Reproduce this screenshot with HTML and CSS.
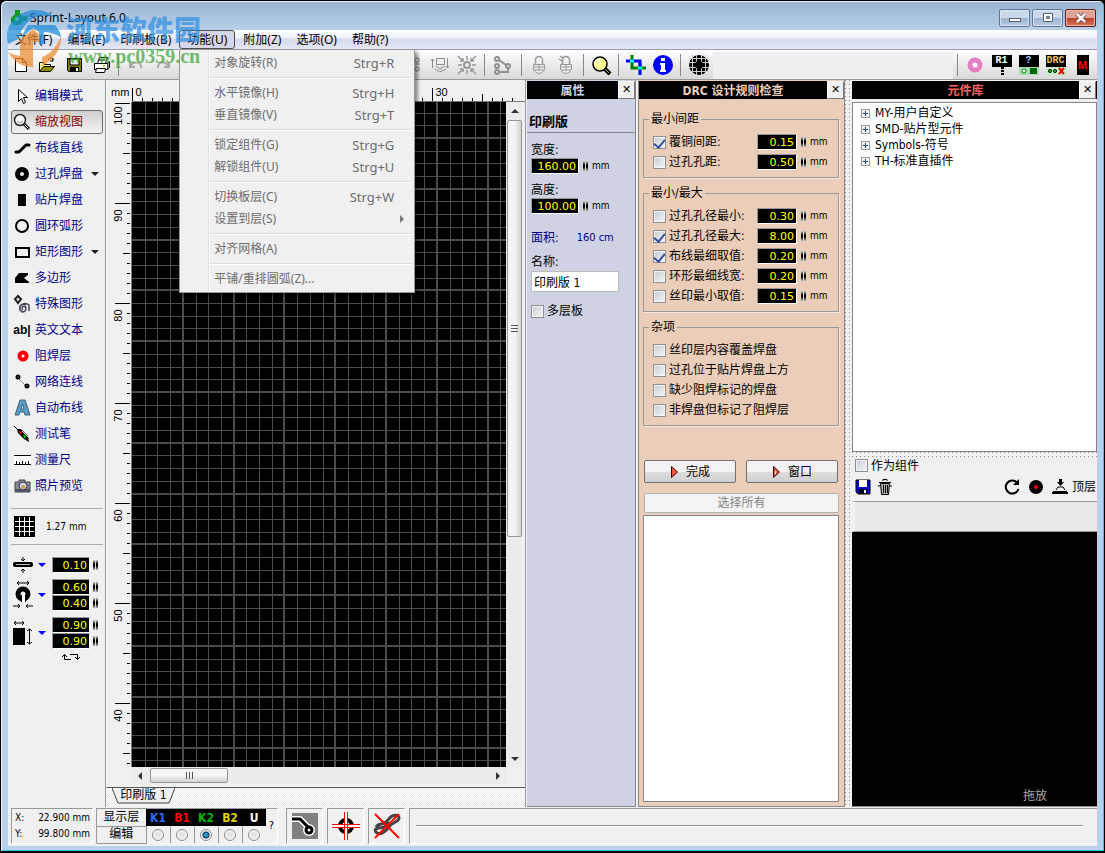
FILE: index.html
```html
<!DOCTYPE html>
<html lang="zh-CN">
<head>
<meta charset="utf-8">
<title>Sprint-Layout 6.0</title>
<link rel="stylesheet" href="styles.css">
</head>
<body>
<div class="window">
  <header class="titlebar">
    <svg class="app-icon" width="17" height="18" viewBox="0 0 17 18"><path fill="#0a9a1c" d="M4 1h5v4h1l2 2h4v5h-4l-3 4H3l-3-3V9l3-3 1-1z"/><circle cx="6" cy="10" r="2" fill="#d8ffd8"/></svg>
    <h1>Sprint-Layout 6.0</h1>
    <div class="caption-buttons">
      <button aria-label="最小化"><svg width="14" height="12"><rect x="1.500" y="6.500" width="11" height="3" fill="#fff" stroke="#53606f"/></svg></button>
      <button aria-label="最大化"><svg width="14" height="12"><path fill="#fff" stroke="#53606f" fill-rule="evenodd" d="M2.500 1.500h9v8h-9zM5.500 4.500h3v2h-3z"/></svg></button>
      <button class="quit" aria-label="关闭"><svg width="14" height="12"><path d="M3 2l8 8M11 2l-8 8" stroke="#53404a" stroke-width="4"/><path d="M3 2l8 8M11 2l-8 8" stroke="#fff" stroke-width="2.500"/></svg></button>
    </div>
  </header>

  <div class="client">
    <nav class="menubar">
      <button>文件(F)</button>
      <button>编辑(E)</button>
      <button>印刷板(B)</button>
      <div class="menu-host">
        <button class="open">功能(U)</button>
        <div class="dropdown">
          <button>对象旋转(R)<kbd>Strg+R</kbd></button>
          <hr>
          <button>水平镜像(H)<kbd>Strg+H</kbd></button>
          <button>垂直镜像(V)<kbd>Strg+T</kbd></button>
          <hr>
          <button>锁定组件(G)<kbd>Strg+G</kbd></button>
          <button>解锁组件(U)<kbd>Strg+U</kbd></button>
          <hr>
          <button>切换板层(C)<kbd>Strg+W</kbd></button>
          <button class="has-sub">设置到层(S)</button>
          <hr>
          <button>对齐网格(A)</button>
          <hr>
          <button>平铺/重排圆弧(Z)...</button>
        </div>
      </div>
      <button>附加(Z)</button>
      <button>选项(O)</button>
      <button>帮助(?)</button>
    </nav>

    <div class="toolbar">
      <button aria-label="新建"><svg width="20" height="20"><path d="M4.500 3.500h7l4 4v9h-11zM11.500 3.500v4h4" fill="#fff" stroke="#000"/></svg></button>
      <button aria-label="打开"><svg width="20" height="20"><path d="M2.500 16.500v-9h4l1 2h6v3" fill="#ffff9a" stroke="#000"/><path d="M2.500 16.500l4-5h11l-4 5z" fill="#8c8c00" stroke="#000"/><path d="M11 5c2-3 4-2 5 0M16 3v3h-3" fill="none" stroke="#000"/></svg></button>
      <button aria-label="保存"><svg width="20" height="20"><path d="M3.500 3.500h14v13h-13l-1-1z" fill="#808000" stroke="#000"/><path d="M6 4h9v6H6z" fill="#e8e8e8" stroke="#000"/><path d="M6 12h9v5H6z"/><path d="M12 13h2v3h-2z" fill="#fff"/></svg></button>
      <button aria-label="打印"><svg width="20" height="20"><path d="M6.500 8.500l2-6h8l-2 6M8 5h6M3.500 8.500h13v6h-13z" fill="#fff" stroke="#000"/><path d="M16.500 8.500l2-2v6l-2 2" fill="#999" stroke="#000"/><path d="M5.500 13.500h9l-1 4h-9z" fill="#fff" stroke="#000"/><path d="M12 11h2" stroke="#cc0" stroke-width="2"/></svg></button>
      <i class="sep"></i>
      <button aria-label="撤销"><svg width="20" height="20" fill="none" stroke="#aaa" stroke-width="2"><path d="M4 7v5h5M4 12c3-6 12-6 11 1"/></svg></button>
      <button aria-label="重做"><svg width="20" height="20" fill="none" stroke="#aaa" stroke-width="2"><path d="M16 7v5h-5M16 12c-3-6-12-6-11 1"/></svg></button>
      <i class="behind-menu"></i>
      <button aria-label="镜像"><svg width="20" height="20" fill="none" stroke="#999" stroke-width="1.500"><circle cx="14" cy="5" r="2"/><circle cx="14" cy="14" r="2"/><path d="M5 9h12M5 5v10"/></svg></button>
      <button aria-label="旋转"><svg width="20" height="20" fill="none" stroke="#8c8c8c"><path d="M6.500 3.500h8v6h-8zM2.500 4v9M1 6l1.500-2L4 6M17.500 3v10M16 11l1.500 2 1.500-2M6 11l4 3 5-3M5 14l5 3 6-3"/></svg></button>
      <button aria-label="对齐"><svg width="20" height="20" fill="none" stroke="#999" stroke-width="1.500"><circle cx="10" cy="10" r="3" stroke-width="2"/><path d="M1 1l5 5M6 3v3H3M19 1l-5 5M14 3v3h3M1 19l5-5M3 14h3v3M19 19l-5-5M17 14h-3v3M10 1v4M10 15v4M1 10h4M15 10h4"/></svg></button>
      <i class="sep"></i>
      <button class="wide" aria-label="连接"><svg width="20" height="20" fill="none" stroke="#909090" stroke-width="2"><circle cx="4" cy="4" r="2"/><circle cx="4" cy="11" r="2"/><circle cx="15" cy="11" r="2"/><circle cx="4" cy="17" r="2"/><path d="M6 5l7 5M15 13v4H6"/></svg></button>
      <i class="sep"></i>
      <button aria-label="锁定"><svg width="20" height="20" fill="#eee" stroke="#999"><path d="M6.500 9V5a3.500 3.500 0 0 1 7 0v4" fill="none" stroke-width="1.500"/><path d="M4.500 9.500h11v5q-2 4-5.500 4t-5.500-4zM5 12h10M5 15h10M10 10v6"/></svg></button>
      <button aria-label="解锁"><svg width="20" height="20" fill="#eee" stroke="#999"><path d="M6.500 9V5a3.500 3.500 0 0 1 7 0v4M3 4l3 2M4 1l3 2" fill="none" stroke-width="1.500"/><path d="M4.500 9.500h11v5q-2 4-5.500 4t-5.500-4zM5 12h10M5 15h10M10 10v6"/></svg></button>
      <i class="sep"></i>
      <button aria-label="缩放"><svg width="22" height="22"><circle cx="10" cy="10" r="7" fill="#ffff96" stroke="#000" stroke-width="1.500"/><path d="M6 9q1-3 4-4" stroke="#fff" fill="none" stroke-width="2"/><path d="M15 15l5 5" stroke="#000" stroke-width="4"/><path d="M15 15l4 4" stroke="#a9a936"/></svg></button>
      <i class="sep"></i>
      <button aria-label="裁剪"><svg width="22" height="22" fill="none" stroke-width="3"><path d="M7 1v13h14" stroke="#008000"/><path d="M1 7h14v14" stroke="#00f"/><path d="M5 7h4M13 14h4" stroke="#0ff"/><path d="M15 9v3" stroke="#00f"/></svg></button>
      <button aria-label="信息"><svg width="22" height="22"><circle cx="11" cy="11" r="10" fill="#00f"/><path d="M9 4h4v3H9zM8 9h5v7h1v2H8v-2h1v-5H8z" fill="#fff"/></svg></button>
      <i class="sep"></i>
      <button class="wide" aria-label="网格"><svg width="22" height="22"><circle cx="11" cy="11" r="10"/><path d="M1 4.500h20M1 8.500h20M1 13.500h20M1 17.500h20M4.500 1v20M8.500 1v20M13.500 1v20M17.500 1v20" stroke="#ccc"/><circle cx="11" cy="11" r="4"/></svg></button>
      <div class="toolbar-blank"></div>
      <i class="sep"></i>
      <button aria-label="焊盘"><svg width="20" height="20"><circle cx="10" cy="10" r="5" fill="#fff" stroke="#e57fc4" stroke-width="5"/></svg></button>
      <button class="chip" aria-label="元件"><span>R1</span><svg width="20" height="8"><path d="M9 0h3v2H9zM9 3h3v2H9zM9 6h3v2H9z"/></svg></button>
      <button class="chip query" aria-label="查询"><span>?</span><svg width="20" height="8"><path fill="#a9dcb4" d="M0 0h20v8H0z"/><circle cx="5" cy="4" r="2" stroke="#080" fill="#fff"/><path fill="#060" d="M11 1h7v6h-7z"/></svg></button>
      <button class="chip rules" aria-label="规则检查"><span>DRC</span><svg width="20" height="8"><path fill="#c5ecc9" d="M0 0h20v8H0z"/><circle cx="4" cy="4" r="1.500" fill="#0f0" stroke="#000"/><circle cx="9" cy="4" r="1.500" fill="#0f0" stroke="#000"/><path d="M13 1l5 6M18 1l-5 6" stroke="#f00" stroke-width="2"/></svg></button>
      <button aria-label="元件库"><span class="macro">M</span></button>
    </div>

    <main class="workspace">
      <aside class="tools">
        <button><svg width="20" height="20"><path d="M6.500 3.500v12l3-3 2 5 2-1-2-5h4z" fill="#fff" stroke="#000"/></svg>编辑模式</button>
        <button class="active"><svg width="20" height="20"><circle cx="8" cy="8" r="5.500" fill="#fff" stroke="#222" stroke-width="1.500"/><path d="M5 8q3 3 6 0v2q-3 3-6 0z" fill="#bbb"/><path d="M12 12l5 5" stroke="#000" stroke-width="3"/><path d="M12.500 12.500l4 4" stroke="#fff"/></svg>缩放视图</button>
        <button><svg width="20" height="20"><path d="M4 14h3l7-7h3" fill="none" stroke="#000" stroke-width="3" stroke-linecap="round" stroke-linejoin="round"/></svg>布线直线</button>
        <button class="more"><svg width="20" height="20"><circle cx="10" cy="10" r="4.500" fill="#f0f0f0" stroke="#000" stroke-width="5"/></svg>过孔焊盘</button>
        <button><svg width="20" height="20"><path d="M6 4h8v12H6z"/></svg>贴片焊盘</button>
        <button><svg width="20" height="20"><circle cx="10" cy="10" r="6" fill="none" stroke="#000" stroke-width="2"/></svg>圆环弧形</button>
        <button class="more"><svg width="20" height="20"><path d="M4 6h13v9H4z" fill="none" stroke="#000" stroke-width="2"/></svg>矩形图形</button>
        <button><svg width="20" height="20"><path d="M3 15V10l4-5h9v2l-4 3 5 4v1z"/></svg>多边形</button>
        <button><svg width="20" height="20" fill="none" stroke="#222" stroke-width="1.500"><path d="M6 2l3 3-3 4-3-4z" stroke-width="2"/><path d="M11 16a2 2 0 1 1 3-2q0 4-4 4-4-3-1-7 4-3 8 0v6M8 17v-5q3-3 6-1" stroke="#434358"/></svg>特殊图形</button>
        <button><b class="glyph">ab|</b>英文文本</button>
        <button><svg width="20" height="20"><circle cx="11" cy="10" r="3.500" fill="#fff" stroke="#f00" stroke-width="4"/></svg>阻焊层</button>
        <button><svg width="20" height="20"><path d="M6 6l9 9" stroke="#888"/><circle cx="6" cy="5" r="1.500" fill="#fff" stroke="#000" stroke-width="2"/><circle cx="15" cy="14" r="1.500" fill="#fff" stroke="#000" stroke-width="2"/></svg>网络连线</button>
        <button><svg width="20" height="20"><path fill="#5a9bc8" stroke="#46606f" fill-rule="evenodd" d="M3 17L8 2h5l5 15h-5l-1-3H8l-1 3zM9 11h3l-1.500-5z"/></svg>自动布线</button>
        <button><svg width="20" height="20"><path d="M2 2l4 4" stroke="#000"/><path d="M5 5l4 0 7 7 1 6-5-3-6-6z"/><path d="M8 7l1 3" stroke="#f00" stroke-width="2"/><path d="M12 11l1 3" stroke="#0c0" stroke-width="2"/><path d="M10 7l6 6" stroke="#bbb"/></svg>测试笔</button>
        <button><svg width="20" height="20"><path d="M2 5h17v10H2z" fill="#fff"/><path d="M2 5.500h17M2 14.500h17M4.500 11v3M7.500 12v2M10.500 11v3M13.500 12v2M16.500 11v3" stroke="#000"/></svg>测量尺</button>
        <button><svg width="20" height="20"><path d="M3 6h4V4h6v2h5v10H3z" fill="#858995" stroke="#42444e"/><path d="M3 13h15v3H3z" fill="#505464"/><circle cx="11" cy="10" r="4" fill="#ccd2e8" stroke="#303648"/><circle cx="11" cy="11" r="2" fill="#db9c32"/></svg>照片预览</button>

        <div class="grid-size">
          <svg width="21" height="21"><path d="M0 0h21v21H0z"/><path d="M1 5.500h19M1 10.500h19M1 15.500h19M5.500 1v19M10.500 1v19M15.500 1v19" stroke="#fff"/></svg>
          <span>1.27 mm</span>
        </div>

        <div class="sizes">
          <div class="size-row">
            <svg width="20" height="16"><rect y="5" width="20" height="5" rx="2"/><path d="M3 7.500h14" stroke="#bbb"/><path d="M10 0v4M8 2l2 2 2-2M10 16v-4M8 14l2-2 2 2" stroke="#000" fill="none"/></svg>
            <i class="pick"></i>
            <div><label class="stack"><input class="num" value="0.10" aria-label="线宽"><i class="spin"></i></label></div>
          </div>
          <div class="size-row">
            <svg width="20" height="30"><path d="M4 3h12M6 1L4 3l2 2M14 1l2 2-2 2M0 26h7M5 24l2 2-2 2M20 26h-7M15 24l-2 2 2 2" stroke="#000" fill="none"/><circle cx="10" cy="14" r="5" fill="#f0f0f0" stroke="#000" stroke-width="5"/><path d="M9 14h3v8H9z" fill="#fff"/><path d="M8.500 15v7M12.500 15v7" stroke="#000"/></svg>
            <i class="pick"></i>
            <div><label class="stack"><input class="num" value="0.60" aria-label="外径"><i class="spin"></i></label><label class="stack"><input class="num" value="0.40" aria-label="孔径"><i class="spin"></i></label></div>
          </div>
          <div class="size-row">
            <svg width="20" height="26"><path d="M0 8h12v17H0z"/><path d="M1 3h10M3 1L1 3l2 2M9 1l2 2-2 2M16.500 9v15M14 11l2.500-2L19 11M14 22l2.500 2 2.500-2" stroke="#000" fill="none"/></svg>
            <i class="pick"></i>
            <div><label class="stack"><input class="num" value="0.90" aria-label="宽"><i class="spin"></i></label><label class="stack"><input class="num" value="0.90" aria-label="高"><i class="spin"></i></label></div>
          </div>
          <svg class="swap" width="20" height="9" fill="none" stroke="#000"><path d="M10 6.500H3.500V2M1 4l2.500-2.500L6 4M9 1.500h7.500V6M14 4l2.500 2.500L19 4"/></svg>
        </div>
      </aside>

      <section class="editor">
        <div class="sheet">
          <span class="unit">mm</span>
          <svg id="ruler-x"></svg>
          <svg id="ruler-y"></svg>
          <svg id="board"></svg>
          <div class="scroll vertical"><i class="arrow up"></i><div class="thumb"></div><i class="arrow down"></i></div>
          <div class="scroll horizontal"><i class="arrow left"></i><div class="thumb"></div><i class="arrow right"></i></div>
        </div>
        <div class="tabs"><button><svg width="63" height="16"><path d="M0 0l6 15h51l6-15" fill="#f0f0f0" stroke="#444"/></svg><span>印刷版 1</span></button></div>
      </section>

      <aside class="panel props">
        <header><h2>属性</h2><button aria-label="关闭属性">✕</button></header>
        <h3>印刷版</h3>
        <div class="props-body">
          <label for="w">宽度:</label>
          <div class="measure"><input class="num" id="w" value="160.00"><i class="spin"></i><span>mm</span></div>
          <label for="h">高度:</label>
          <div class="measure"><input class="num" id="h" value="100.00"><i class="spin"></i><span>mm</span></div>
          <p class="area"><span>面积:</span><span class="latin">160 cm</span></p>
          <label for="n">名称:</label>
          <input class="name" id="n" value="印刷版 1">
          <label class="check"><input type="checkbox">多层板</label>
        </div>
      </aside>

      <aside class="panel drc">
        <header><h2>DRC 设计规则检查</h2><button aria-label="关闭规则检查">✕</button></header>
        <div class="drc-body">
          <fieldset>
            <legend>最小间距</legend>
            <div class="rule"><label class="check"><input type="checkbox" checked>覆铜间距:</label><input class="num" value="0.15" aria-label="覆铜间距"><i class="spin"></i><span>mm</span></div>
            <div class="rule"><label class="check"><input type="checkbox">过孔孔距:</label><input class="num" value="0.50" aria-label="过孔孔距"><i class="spin"></i><span>mm</span></div>
          </fieldset>
          <fieldset>
            <legend>最小/最大</legend>
            <div class="rule"><label class="check"><input type="checkbox">过孔孔径最小:</label><input class="num" value="0.30" aria-label="过孔孔径最小"><i class="spin"></i><span>mm</span></div>
            <div class="rule"><label class="check"><input type="checkbox" checked>过孔孔径最大:</label><input class="num" value="8.00" aria-label="过孔孔径最大"><i class="spin"></i><span>mm</span></div>
            <div class="rule"><label class="check"><input type="checkbox" checked>布线最细取值:</label><input class="num" value="0.20" aria-label="布线最细取值"><i class="spin"></i><span>mm</span></div>
            <div class="rule"><label class="check"><input type="checkbox">环形最细线宽:</label><input class="num" value="0.20" aria-label="环形最细线宽"><i class="spin"></i><span>mm</span></div>
            <div class="rule"><label class="check"><input type="checkbox">丝印最小取值:</label><input class="num" value="0.15" aria-label="丝印最小取值"><i class="spin"></i><span>mm</span></div>
          </fieldset>
          <fieldset>
            <legend>杂项</legend>
            <label class="check"><input type="checkbox">丝印层内容覆盖焊盘</label>
            <label class="check"><input type="checkbox">过孔位于贴片焊盘上方</label>
            <label class="check"><input type="checkbox">缺少阻焊标记的焊盘</label>
            <label class="check"><input type="checkbox">非焊盘但标记了阻焊层</label>
          </fieldset>
          <div class="actions">
            <button><svg width="10" height="14"><path d="M1.500 1.500v11l6-5.500z" fill="#e8583c" stroke="#400"/></svg>完成</button>
            <button><svg width="10" height="14"><path d="M1.500 1.500v11l6-5.500z" fill="#e8583c" stroke="#400"/><path d="M3 6h1v3H3z" fill="#fff"/></svg>窗口</button>
          </div>
          <button class="select-all" disabled>选择所有</button>
          <div class="results"></div>
        </div>
      </aside>

      <div class="splitter"></div>

      <aside class="panel library">
        <header><h2>元件库</h2><button aria-label="关闭元件库">✕</button></header>
        <ul class="tree">
          <li><i></i><span>MY-用户自定义</span></li>
          <li><i></i><span>SMD-贴片型元件</span></li>
          <li><i></i><span>Symbols-符号</span></li>
          <li><i></i><span>TH-标准直插件</span></li>
        </ul>
        <div class="splitter flat"></div>
        <div class="lib-options">
          <label class="check"><input type="checkbox">作为组件</label>
          <div class="lib-tools">
            <button aria-label="保存元件"><svg width="16" height="16"><path d="M1 1h14v14H3l-2-2z" fill="#00d" stroke="#000"/><path d="M4 1h8v7H4z" fill="#fff"/><path d="M4 10h8v5H4z"/><path d="M9 11h2v3H9z" fill="#fff"/></svg></button>
            <button aria-label="删除元件"><svg width="16" height="18"><path d="M3.500 5.500h9l-1 11h-7z" fill="#aaa" stroke="#000"/><path d="M2 4.500h12M6 3V1.500h4V3M6.500 7v8M8.500 7v8M10.500 7v8M2 7v2M14 7v2" fill="none" stroke="#000"/></svg></button>
            <span class="grow"></span>
            <button aria-label="旋转元件"><svg width="18" height="18"><path d="M14 4.500a6.500 6.500 0 1 0 1.500 6.500" fill="none" stroke="#000" stroke-width="2"/><path d="M16 1v6h-6z"/></svg></button>
            <button aria-label="定位"><svg width="18" height="18"><circle cx="9" cy="9" r="7"/><circle cx="9" cy="9" r="2" fill="#f00"/></svg></button>
            <button aria-label="放置"><svg width="18" height="18"><path d="M8 1h3v3h2l-3.500 4L6 4h2z"/><path d="M5 12l2-3h5l2 3M2 13.500h14" fill="none" stroke="#000"/><path d="M1 14h16v2H1z"/></svg></button>
            <button class="side">顶层</button>
          </div>
        </div>
        <div class="lib-strip"></div>
        <div class="preview">拖放</div>
      </aside>
    </main>

    <footer class="status">
      <dl class="cell coords"><dt>X:</dt><dd>22.900 mm</dd><dt>Y:</dt><dd>99.800 mm</dd></dl>
      <div class="cell layers-cell">
        <table class="layers">
          <tr><th scope="row">显示层</th><td class="k1">K1</td><td class="b1">B1</td><td class="k2">K2</td><td class="b2">B2</td><td class="u">U</td></tr>
          <tr><th scope="row">编辑</th><td><input type="radio" name="layer" aria-label="K1"></td><td><input type="radio" name="layer" aria-label="B1"></td><td><input type="radio" name="layer" aria-label="K2" checked></td><td><input type="radio" name="layer" aria-label="B2"></td><td><input type="radio" name="layer" aria-label="U"></td></tr>
        </table>
        <button>?</button>
      </div>
      <button class="cell icon" aria-label="捕捉"><svg width="26" height="26"><path d="M0 0h26v26H0z" fill="#808080"/><path d="M0 6h8l8 8" fill="none" stroke="#fff" stroke-width="6"/><circle cx="17" cy="17" r="6" fill="#fff"/><path d="M0 6h8l8 8" fill="none" stroke="#000" stroke-width="3"/><circle cx="17" cy="17" r="3" fill="#fff" stroke="#000" stroke-width="3"/></svg></button>
      <button class="cell icon" aria-label="十字线"><svg width="28" height="28"><circle cx="14" cy="14" r="6" fill="none" stroke="#000" stroke-width="4"/><path d="M14 0v28M0 14h28" stroke="#fff" stroke-width="3"/><path d="M12.500 0v28M15.500 0v28M0 12.500h28M0 15.500h28" stroke="#f00"/></svg></button>
      <button class="cell icon" aria-label="橡皮筋"><svg width="28" height="28"><path d="M3 15c3-5 8-1 12-7s11-6 11-2-7 4-10 9-9 8-12 6-2-5 2-5 7-1 10-6" fill="none" stroke="#444" stroke-width="3"/><path d="M2 2l24 24M26 2L2 26" stroke="#f00" stroke-width="2"/></svg></button>
      <div class="cell rest"><hr></div>
    </footer>
  </div>
</div>

<div class="watermark">
  <svg width="60" height="60" viewBox="0 0 60 60"><path d="M3 34C-2 14 14 0 31 0c8 0 14 3 18 7-15-5-30 2-36 22z" fill="#1e8ad6"/><path d="M3 42c9 14 18 15 25 15V32h9v24c12-6 20-18 19-30-5 14-15 20-19 21V27L28 19 15 30v16C10 45 6 44 3 42z" fill="#ee8a2e"/><path d="M15 29l8-14h27c4 5 6 9 6 12-5-3-12-5-17-5v12h-5V22l-6-4z" fill="#1e8ad6"/></svg>
  <div><strong>河东软件园</strong><em>www.pc0359.cn</em></div>
</div>
<script src="app.js"></script>
</body>
</html>
```

FILE: styles.css
```css
* { box-sizing: border-box; }
body {
  margin: 0;
  background: #000;
  font-family: "DejaVu Sans Condensed", "Noto Sans CJK SC", sans-serif;
  font-size: 12px;
  line-height: 16px;
  color: #000;
}
button, input {
  font: inherit;
  color: inherit;
  margin: 0;
  padding: 0;
  border: 0;
  background: none;
  border-radius: 0;
}
h1, h2, h3, p, ul, dl, dd, fieldset { margin: 0; padding: 0; }
svg { display: block; flex: none; }

/* Window frame */
.window {
  height: 100vh;
  display: flex;
  flex-direction: column;
  padding: 0 6px 5px;
  border: 1px solid #000;
  border-width: 1px 1px 2px;
  border-radius: 6px 6px 0 0;
  background: linear-gradient(#9ab4d1, #b9d1ea 30px);
  box-shadow: inset 1px 1px #e9f3fb, inset -1px -1px #3cc5dd;
}
.titlebar {
  flex: none;
  height: 29px;
  display: flex;
  align-items: center;
  gap: 2px;
  padding: 5px 2px 0 4px;
}
.titlebar h1 {
  flex: 1;
  font: 12px/16px "Noto Sans", sans-serif;
}
.caption-buttons { display: flex; gap: 2px; }
.caption-buttons button {
  width: 31px;
  height: 18px;
  display: grid;
  place-items: center;
  border: 1px solid #60758f;
  border-radius: 2px;
  background: linear-gradient(#c9d9ea 50%, #9cb4cf 50%, #b5cbe2);
  box-shadow: inset 0 0 0 1px #d7e5f3;
}
.caption-buttons .quit {
  border-color: #5c1d1d;
  background: linear-gradient(#dfa396 50%, #bf3c22 50%, #d17a60);
  box-shadow: inset 0 0 0 1px #e9b5a8;
}
.client {
  flex: 1;
  min-height: 0;
  display: flex;
  flex-direction: column;
  margin: 0 1px;
  background: #f0f0f0;
}

/* Menu bar */
.menubar {
  flex: none;
  height: 20px;
  display: flex;
  gap: 1px;
  border-bottom: 1px solid #9a9ca8;
  background: linear-gradient(#fff, #eef1f9 8px, #d5daed 9px, #e3e7f5);
  font-family: "Noto Sans", "Noto Sans CJK SC", sans-serif;
}
.menubar > button, .menu-host > button {
  height: 19px;
  padding: 0 7px;
}
.menu-host > .open {
  border: 1px solid #4c4c55;
  border-radius: 3px;
  background: #d5d8e8;
}
.menu-host { position: relative; }
.dropdown {
  position: absolute;
  z-index: 5;
  top: 19px;
  left: 0;
  width: 236px;
  display: flex;
  flex-direction: column;
  padding: 2px;
  border: 1px solid #979797;
  background: linear-gradient(90deg, #f0f0f0 28px, #e0e0e0 28px, #e0e0e0 29px, #fff 29px, #fff 30px, #f0f0f0 30px);
  box-shadow: 3px 3px 3px #00000066;
  color: #6d6d6d;
}
.dropdown button {
  height: 22px;
  display: flex;
  align-items: center;
  justify-content: space-between;
  padding: 0 18px 0 32px;
}
.dropdown kbd { font: 13px/16px "Noto Sans", sans-serif; }
.dropdown hr {
  width: 202px;
  height: 2px;
  margin: 3px 0 3px auto;
  border: 0;
  border-top: 1px solid #dcdcdc;
  border-bottom: 1px solid #fff;
}
.dropdown .has-sub { padding-right: 8px; }
.has-sub::after {
  content: "";
  border: 4px solid transparent;
  border-left-color: #777;
  border-right: 0;
}

/* Toolbar */
.toolbar {
  flex: none;
  height: 30px;
  display: flex;
  align-items: center;
  padding-right: 1px;
  border-top: 1px solid #fff;
  border-bottom: 1px solid #999;
  background: linear-gradient(#fdfdfd, #d9d9d9);
}
.toolbar button {
  width: 27px;
  height: 27px;
  display: grid;
  place-content: center;
}
.toolbar button:first-child { width: 25px; }
.toolbar .wide { width: 29px; }
.sep { width: 8px; height: 22px; background: linear-gradient(#888, #888) center / 1px 100% no-repeat; }
.behind-menu { width: 223px; }
.toolbar-blank { flex: 1; height: 27px; background: #efefef; }
.chip span {
  width: 20px;
  height: 12px;
  background: #000;
  color: #fff;
  font: bold 10px/12px "Liberation Mono", monospace;
}
.query span { color: #9cf; }
.rules span { color: #ecc06c; }
.macro {
  width: 12px;
  height: 20px;
  background: #000;
  color: #f00;
  font: bold 11px/20px "Liberation Sans", sans-serif;
}

/* Workspace columns */
.workspace {
  flex: 1;
  min-height: 0;
  display: grid;
  grid-template-columns: 98px minmax(0, 1fr) 112px 207px 7px 245px;
}

/* Left tools */
.tools {
  display: flex;
  flex-direction: column;
  padding: 4px 2px 0 3px;
  border-right: 1px solid #999;
}
.tools > button {
  flex: none;
  width: 92px;
  height: 24px;
  margin: 0 0 2px;
  display: flex;
  align-items: center;
  gap: 3px;
  padding: 0 1px;
  color: #000084;
}
.tools > .active {
  border: 1px solid #6c6c6c;
  border-radius: 3px;
  padding: 0;
  background: linear-gradient(#cfcfcf, #f4f4f4);
  color: #840000;
}
.more::after {
  content: "";
  margin-left: 5px;
  border: 4px solid transparent;
  border-top-color: #222;
  border-bottom: 0;
}
.glyph { width: 20px; color: #000; font: bold 12px/16px "Liberation Sans", sans-serif; }
.grid-size {
  display: flex;
  align-items: center;
  gap: 11px;
  height: 37px;
  margin-top: 8px;
  padding-left: 3px;
  border: 1px solid #aaa;
  border-width: 1px 0;
  font-size: 10px;
}
.sizes { display: flex; flex-direction: column; gap: 6px; padding: 12px 0 0 2px; }
.size-row { display: flex; align-items: center; }
.pick { margin: 0 6px 0 5px; border: 4px solid transparent; border-top-color: #00f; border-bottom: 0; }
.stack { display: flex; align-items: center; gap: 3px; }
.stack .num { width: 38px; }
.swap { margin: -2px 0 0 48px; }
.num {
  width: 40px;
  height: 16px;
  padding-right: 2px;
  border: 1px solid #999;
  border-right-color: #fff;
  border-bottom-color: #fff;
  background: #000;
  color: #ff0;
  font: 11px/14px "DejaVu Sans", sans-serif;
  text-align: right;
}
.spin {
  flex: none;
  width: 5px;
  height: 10px;
  background:
    linear-gradient(90deg, transparent 2px, #ddd 2px, #ddd 3px, transparent 3px),
    linear-gradient(#ccc, #000 40%, #000 60%, #bbb);
}

/* Editor */
.editor { display: flex; flex-direction: column; min-width: 0; border-right: 1px solid #999; }
.sheet {
  flex: 1;
  min-height: 0;
  display: grid;
  grid-template-columns: 25px minmax(0, 1fr) 19px;
  grid-template-rows: 22px minmax(0, 1fr) 20px;
  border-left: 1px solid #fff;
  border-bottom: 1px solid #555;
}
.unit { padding: 4px 0 0 4px; font: 11px/16px "Liberation Sans", sans-serif; }
#ruler-x { grid-column: 2 / 4; width: 100%; height: 22px; }
#ruler-y { width: 25px; height: 100%; min-height: 0; }
#board { width: 100%; height: 100%; min-height: 0; background: #000; }
#ruler-x text, #ruler-y text { font: 11px "Liberation Sans", sans-serif; }
.scroll { display: flex; align-items: center; background: #ececec; }
.vertical { flex-direction: column; padding: 7px 0 6px; width: 17px; }
.horizontal { grid-column: 2; height: 17px; padding: 0 6px; }
.thumb {
  border: 1px solid #979797;
  border-radius: 2px;
}
.vertical .thumb {
  width: 15px;
  height: 64%;
  margin: 7px 0 auto;
  background:
    repeating-linear-gradient(#555 0, #555 1px, transparent 1px, transparent 3px) center / 7px 7px no-repeat,
    linear-gradient(90deg, #f5f5f5 50%, #d2d2d2);
}
.horizontal .thumb {
  width: 78px;
  height: 15px;
  margin: 0 auto 0 8px;
  background:
    repeating-linear-gradient(90deg, #555 0, #555 1px, transparent 1px, transparent 3px) center / 7px 7px no-repeat,
    linear-gradient(#f5f5f5 50%, #d2d2d2);
}
.arrow { border: 4px solid transparent; }
.up { border-top: 0; border-bottom-color: #333; }
.down { border-bottom: 0; border-top-color: #333; }
.left { border-left: 0; border-right-color: #333; }
.right { border-right: 0; border-left-color: #333; }
.tabs {
  height: 19px;
  padding-left: 6px;
  background: repeating-conic-gradient(#e9e9e9 0 25%, #fff 0 50%) 0 0 / 2px 2px;
}
.tabs button { display: grid; }
.tabs svg, .tabs span { grid-area: 1 / 1; }
.tabs span { z-index: 1; line-height: 15px; text-align: center; }

/* Panels */
.panel { display: flex; flex-direction: column; min-height: 0; }
.panel > header {
  flex: none;
  display: flex;
  height: 18px;
  margin-top: 1px;
  background: #000;
  color: #d0d3e4;
}
.panel h2 { flex: 1; font: bold 12px/20px "DejaVu Sans Condensed", "Noto Sans CJK SC", sans-serif; text-align: center; }
.panel > header button {
  width: 17px;
  border: 1px solid #fff;
  border-right-color: #777;
  border-bottom-color: #777;
  background: #f0f0f0;
  color: #000;
  font: 11px/14px "DejaVu Sans", sans-serif;
}
.props {
  margin: 0 2px 0 1px;
  border-right: 1px solid #888;
  border-bottom: 1px solid #888;
  background: #cfd2e2;
}
.props h3 {
  padding: 14px 0 2px 2px;
  border-bottom: 1px solid #888;
  font-size: 13px;
  line-height: 17px;
}
.props-body { display: flex; flex-direction: column; padding: 9px 4px 0; }
.props-body > label { height: 16px; }
.measure { display: flex; align-items: center; gap: 4px; height: 16px; margin-bottom: 8px; font-size: 10px; }
.measure .num { width: 48px; }
.area { display: flex; gap: 18px; margin: 8px 0; color: #000084; }
.latin { font-size: 11px; }
.name { width: 88px; height: 21px; margin: 1px 0 11px; padding: 0 2px; border: 1px solid #bbb; background: #fff; }
.check { display: flex; align-items: center; gap: 3px; white-space: nowrap; }
input[type="checkbox"] {
  appearance: none;
  flex: none;
  width: 13px;
  height: 13px;
  border: 1px solid #8e8f8f;
  background: linear-gradient(135deg, #c6ccd4, #f6f6f6);
  box-shadow: inset 0 0 0 1px #f4f4f4;
}
input[type="checkbox"]:checked {
  display: grid;
  justify-items: center;
  align-items: start;
}
input[type="checkbox"]:checked::after {
  content: "";
  width: 5px;
  height: 9px;
  border: solid #344f9b;
  border-width: 0 2px 2px 0;
  transform: rotate(40deg);
}

.drc {
  border-left: 1px solid #888;
  border-right: 1px solid #888;
  border-bottom: 1px solid #888;
  background: #eaceb9;
}
.drc > header { color: #eaceb9; }
.drc-body { flex: 1; display: flex; flex-direction: column; padding: 12px 5px 4px 4px; }
fieldset {
  margin-bottom: 7px;
  padding: 5px 7px 5px 9px;
  border: 1px solid #999;
  box-shadow: 1px 1px #fff8;
}
legend { margin-left: -4px; padding: 0 2px; line-height: 16px; }
.rule { display: flex; align-items: center; gap: 4px; height: 20px; font-size: 10px; }
.rule .check { width: 100px; font-size: 12px; }
fieldset > .check { height: 20px; }
.actions { display: grid; grid-template-columns: 1fr 1fr; gap: 10px; margin: 27px 1px 10px; }
.actions button {
  height: 23px;
  display: flex;
  align-items: center;
  justify-content: center;
  gap: 6px;
  border: 1px solid #707070;
  border-radius: 2px;
  background: linear-gradient(#f3f3f3 50%, #dedede 50%, #cfcfcf);
}
.select-all {
  height: 20px;
  margin: 0 0 2px 1px;
  border: 1px solid #adb2b5;
  border-radius: 2px;
  background: #f4f4f4;
  color: #838383;
}
.results { flex: 1; border: 1px solid #828790; background: #fff; }
.splitter { background: conic-gradient(from 0deg at 1px 1px, transparent 270deg, #888 270deg) 0 0 / 4px 4px #f0f0f0; }
.splitter.flat { flex: none; height: 6px; }

/* Library */
.library > header { color: #ff6060; }
.library > header button { margin-right: 1px; }
.tree {
  flex: 350 1 0;
  margin-top: 3px;
  padding: 2px 0 0 8px;
  list-style: none;
  border: 1px solid #828790;
  background: #fff;
}
.tree li { display: flex; align-items: center; height: 16px; }
.tree i {
  width: 9px;
  height: 9px;
  margin-right: 5px;
  border: 1px solid #999;
  background:
    linear-gradient(#24469c, #24469c) center / 5px 1px no-repeat,
    linear-gradient(#24469c, #24469c) center / 1px 5px no-repeat, #f4f4f4;
}
.lib-options { flex: none; padding: 0 0 4px 3px; }
.lib-options .check { height: 15px; }
.lib-tools { display: flex; align-items: center; height: 24px; padding-top: 3px; gap: 6px; }
.lib-tools .side { margin-left: -3px; padding-right: 1px; }
.grow { flex: 1; }
.lib-strip { flex: none; height: 31px; border-top: 1px solid #999; border-bottom: 1px solid #999; background: #e9e9e9; border-left: 3px solid #f2f2f2; }
.preview {
  flex: 275 1 0;
  display: flex;
  align-items: flex-end;
  justify-content: flex-end;
  padding: 0 50px 2px 0;
  border-bottom: 1px solid #888;
  background: #000;
  color: #aaa;
}

/* Status bar */
.status { flex: none; height: 39px; display: flex; gap: 8px; padding: 1px 0 2px 3px; }
.cell { border: 1px solid #999; border-right-color: #fff; border-bottom-color: #fff; }
.coords {
  width: 82px;
  display: grid;
  grid-template-columns: auto 1fr;
  align-content: center;
  padding: 0 2px 0 3px;
  margin-right: -5px;
  font-size: 10px;
}
.coords dd { text-align: right; }
.layers-cell { display: flex; width: 182px; }
.layers { border-collapse: collapse; }
.layers th { width: 49px; padding: 0; border-bottom: 1px solid #999; font-weight: normal; line-height: 15px; }
.layers td {
  width: 24px;
  height: 17px;
  padding: 0;
  border-left: 1px solid #999;
  text-align: center;
  font: bold 12px/16px "DejaVu Sans Condensed", sans-serif;
}
.layers tr:first-child td { background: #000; border-color: #000; }
.layers .k1 { color: #2a6cff; }
.layers .b1 { color: #f00; }
.layers .k2 { color: #00b400; }
.layers .b2 { color: #dcd200; }
.layers .u { color: #fff; }
.layers-cell button { flex: 1; font-size: 11px; }
input[type="radio"] {
  appearance: none;
  display: block;
  width: 12px;
  height: 12px;
  margin: 0 auto;
  border: 1px solid #8e8f8f;
  border-radius: 50%;
  background: radial-gradient(#dcdcdc, #fff);
}
input[type="radio"]:checked { background: radial-gradient(#2fa5df 1px, #123d62 3px, #eee 4px); }
.icon { width: 37px; display: grid; place-items: center; margin-right: -4px; }
.rest { flex: 1; display: flex; align-items: center; padding: 0 14px 0 6px; border-right: 0; }
.rest hr { flex: 1; height: 2px; margin: 0; border: 0; border-top: 1px solid #999; border-bottom: 1px solid #fff; }

/* Watermark */
.watermark {
  position: absolute;
  z-index: 9;
  top: 10px;
  left: 5px;
  display: flex;
  gap: 1px;
  opacity: .72;
  pointer-events: none;
}
.watermark div { display: flex; flex-direction: column; padding-top: 3px; }
.watermark strong { font: 900 27px/32px "Noto Sans CJK SC", sans-serif; color: #2f8fe0; }
.watermark em { padding-left: 2px; font: bold 20px/22px "Liberation Serif", serif; color: #3fa535; }
```

FILE: app.js
```js
// Scale: 10 px per mm, ruler labels every 10 mm, grid pitch 1.27 mm.
const PX = 10;
const PITCH = 12.7;

function line(x1, y1, x2, y2, color, width) {
  return `<path d="M${x1} ${y1}L${x2} ${y2}" stroke="${color}" stroke-width="${width}"/>`;
}

function drawRulerX(svg) {
  let out = line(0, 21.5, svg.clientWidth, 21.5, "#777", 1);
  for (let i = 0; i * PX < svg.clientWidth - 8; i++) {
    const x = i * PX + 0.5;
    const top = i % 10 === 0 ? 8 : i % 5 === 0 ? 14 : 18;
    out += line(x, top, x, 21, "#000", 1);
    if (i % 10 === 0) out += `<text x="${x + 3}" y="16">${i}</text>`;
  }
  svg.innerHTML = out;
}

function drawRulerY(svg) {
  let out = line(24.5, 0, 24.5, svg.clientHeight, "#777", 1);
  for (let i = 0; i * PX < svg.clientHeight; i++) {
    const y = i * PX + 1.5;
    const left = i % 10 === 0 ? 8 : i % 5 === 0 ? 16 : 20;
    out += line(left, y, 23, y, "#000", 1);
    if (i % 10 === 0) out += `<text transform="translate(15 ${y + 12}) rotate(-90)" text-anchor="middle">${100 - i}</text>`;
  }
  svg.innerHTML = out;
}

function drawBoard(svg) {
  const w = svg.clientWidth, h = svg.clientHeight;
  let out = "";
  for (let i = 1; i * PITCH < w; i++) {
    const major = i % 4 === 0;
    const x = Math.round(i * PITCH) + (major ? 0 : 0.5);
    out += line(x, 0, x, h, "#4c4c4c", major ? 2 : 1);
  }
  for (let i = 0; 10.5 + i * PITCH < h; i++) {
    const major = i % 4 === 2;
    const y = Math.round(10.5 + i * PITCH) + (major ? 0 : 0.5);
    out += line(0, y, w, y, "#4c4c4c", major ? 2 : 1);
  }
  svg.innerHTML = out;
}

function draw() {
  drawRulerX(document.getElementById("ruler-x"));
  drawRulerY(document.getElementById("ruler-y"));
  drawBoard(document.getElementById("board"));
}
draw();
window.addEventListener("resize", draw);
```
